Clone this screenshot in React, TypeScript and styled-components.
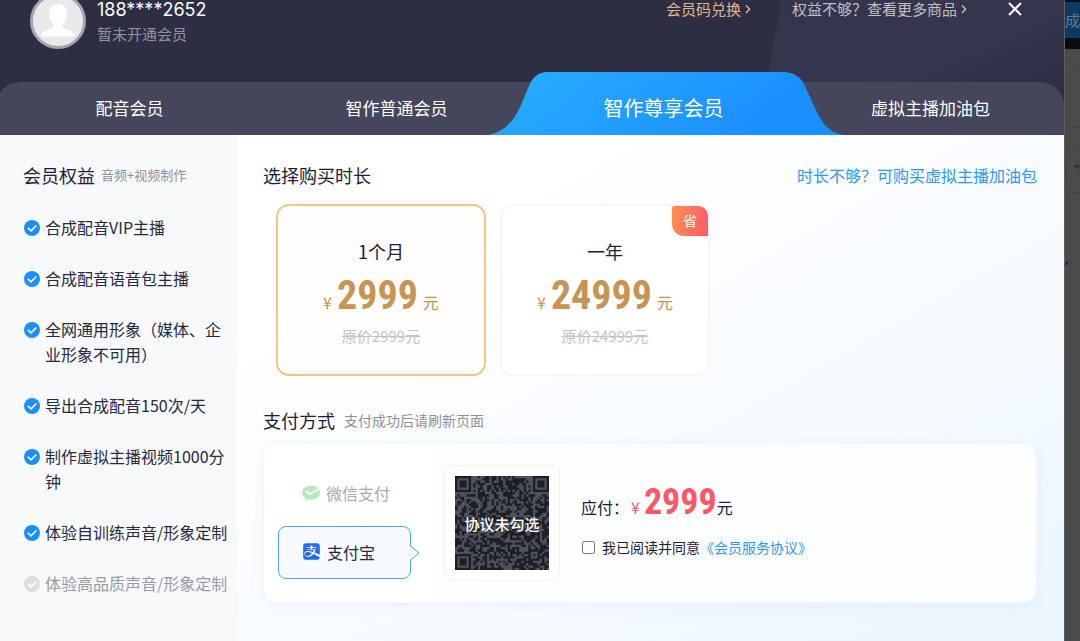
import React, { useState } from "react";
import styled, { createGlobalStyle, css } from "styled-components";
import { FaAlipay } from "react-icons/fa";

const sans = `"Noto Sans CJK SC", "Noto Sans", sans-serif`;
const digits = `Inter, "Noto Sans CJK SC", sans-serif`;
const narrow = `"Roboto Condensed", Roboto, sans-serif`;

const GlobalStyle = createGlobalStyle`
  * { box-sizing: border-box; }
  body { margin: 0; background: #4b4b4b; font-family: ${sans}; color: #1c2035; }
  button { border: 0; padding: 0; background: none; color: inherit; font: inherit; cursor: pointer; }
  a { color: inherit; text-decoration: none; }
  h2, p, ul { margin: 0; padding: 0; font-weight: inherit; }
`;

const Page = styled.div`
  display: flex;
  min-height: 100vh;
  overflow: hidden;
`;

const Dialog = styled.section`
  display: flex;
  flex-direction: column;
  flex: 1;
  min-width: 0;
`;

const Header = styled.header`
  position: relative;
  background: #2d2e44;
  &::before {
    content: "";
    position: absolute;
    inset: 0 0 0 auto;
    width: 300px;
    background: linear-gradient(155deg, #34354c 0%, #36374e 52%, #303148 66%, #2e2f46 100%);
    clip-path: polygon(17px 0, 100% 0, 100% 100%, -6px 100%);
  }
`;

const TopRow = styled.div`
  position: relative;
  display: flex;
  align-items: flex-start;
  height: 82px;
  padding: 0 42px 0 30px;
`;

const Avatar = styled.span`
  display: block;
  width: 56px;
  height: 56px;
  margin-top: -7px;
  border: 3px solid #a5a5b0;
  border-radius: 50%;
  overflow: hidden;
  background: #e9e9e9;
`;

const UserText = styled.div`
  padding: 0 0 0 11px;
`;

const Phone = styled.p`
  font: 400 18px/20px ${digits};
  color: #fff;
`;

const Status = styled.p`
  font-size: 15px;
  line-height: 28px;
  color: #9292a0;
`;

const TopLinks = styled.nav`
  display: flex;
  gap: 40px;
  margin-left: auto;
`;

const TopLink = styled.a<{ $gold?: boolean }>`
  display: flex;
  align-items: center;
  gap: 3px;
  font-size: 15px;
  line-height: 17px;
  white-space: nowrap;
  color: ${(p) => (p.$gold ? "#e2b688" : "#c0c0ca")};
`;

const Close = styled.button`
  display: flex;
  align-items: center;
  height: 17px;
  color: #fff;
`;

const Tabs = styled.div`
  position: relative;
  display: flex;
  height: 53px;
  margin-left: -4px;
  border-radius: 24px 24px 0 0;
  background: #45465b;
`;

const Tab = styled.button<{ $active?: boolean }>`
  position: relative;
  flex: 1;
  padding-bottom: 2px;
  font-size: ${(p) => (p.$active ? "20px" : "17px")};
  line-height: 51px;
  color: #fff;
  z-index: ${(p) => (p.$active ? 1 : 0)};
`;

const TabShape = styled.svg`
  position: absolute;
  bottom: 0;
  left: -42px;
  width: calc(100% + 91px);
  height: 63px;
`;

const TabLabel = styled.span`
  position: relative;
`;

const Body = styled.div`
  display: flex;
  flex: 1;
`;

const Sidebar = styled.aside`
  flex: 0 0 237px;
  padding: 27px 8px 28px 23px;
  background: #f8f9fb;
`;

const HeadingRow = styled.div`
  display: flex;
  align-items: center;
  height: 26px;
  line-height: 26px;
`;

const Heading = styled.h2`
  font-size: 18px;
  line-height: 26px;
  white-space: nowrap;
`;

const Note = styled.span<{ $size: number }>`
  margin-left: ${(p) => (p.$size === 13 ? 6 : 9)}px;
  font-size: ${(p) => p.$size}px;
  color: #8d919c;
`;

const Benefits = styled.ul`
  display: flex;
  flex-direction: column;
  gap: 26px;
  margin-top: 27px;
  list-style: none;
`;

const Benefit = styled.li<{ $off?: boolean }>`
  display: flex;
  gap: 5px;
  padding-left: 1px;
  font-size: 16px;
  line-height: 25px;
  color: ${(p) => (p.$off ? "#999ca5" : "#262a3d")};
  svg { flex: none; margin-top: 5px; color: ${(p) => (p.$off ? "#dcdee0" : "#1a90ff")}; }
`;

const Main = styled.main`
  flex: 1;
  min-width: 0;
  padding: 27px 27px 38px 26px;
  background: linear-gradient(150deg, #fff 20%, #f7fbff 60%, #eaf6ff 100%);
`;

const MoreLink = styled.a`
  margin-left: auto;
  font-size: 16px;
  color: #2d98fb;
`;

const Plans = styled.div`
  display: flex;
  gap: 14px;
  margin: 16px 0 31px 13px;
`;

const Plan = styled.button<{ $active: boolean }>`
  position: relative;
  display: flex;
  flex-direction: column;
  align-items: center;
  width: 210px;
  height: 172px;
  padding-top: 32px;
  border: 2px solid ${(p) => (p.$active ? "#f3c582" : "#f5f7f9")};
  border-radius: 13px;
  background: ${(p) => (p.$active ? "#fffefc" : "#fff")};
`;

const PlanName = styled.span`
  font-size: 18px;
  line-height: 26px;
  color: #1c2035;
`;

const Price = styled.span`
  display: flex;
  align-items: baseline;
  gap: 5px;
  height: 60px;
  font-size: 16px;
  line-height: 64px;
  color: #c69453;
`;

const Amount = styled.strong<{ $due?: boolean }>`
  font-family: ${narrow};
  font-size: ${(p) => (p.$due ? 36 : 40)}px;
  font-weight: 700;
`;

const Original = styled.s`
  font-size: 15px;
  line-height: 24px;
  color: #c3c4c8;
`;

const Badge = styled.span`
  position: absolute;
  top: 0;
  right: 0;
  width: 36px;
  height: 30px;
  border-radius: 2px 10px 0 12px;
  background: linear-gradient(100deg, #ff9050, #ff5a68);
  color: #fff;
  font-size: 14px;
  line-height: 29px;
`;

const PayPanel = styled.div`
  display: flex;
  align-items: center;
  margin-top: 10px;
  padding: 21px 14px;
  border: 1px solid #f3f6f9;
  border-radius: 14px;
  background: linear-gradient(90deg, #fff, #fbfdff);
  box-shadow: 0 4px 16px rgba(60, 90, 130, 0.05);
`;

const Methods = styled.div`
  display: flex;
  flex-direction: column;
  gap: 6px;
`;

const Method = styled.button<{ $active?: boolean }>`
  position: relative;
  display: flex;
  align-items: center;
  gap: 6px;
  width: 133px;
  height: 53px;
  padding: 0 0 2px 23px;
  border: 1px solid transparent;
  border-radius: 8px;
  font-size: 16px;
  color: #a9abb1;
  ${(p) =>
    p.$active &&
    css`
      border-color: #4ba6fb;
      background: #f7fbff;
      color: #262a3d;
    `}
`;

const Pointer = styled.svg`
  position: absolute;
  top: 18px;
  right: -10px;
`;

const CodeCard = styled.div`
  position: relative;
  display: grid;
  place-items: center;
  width: 116px;
  height: 116px;
  margin: 0 21px 0 33px;
  border: 1px solid #f0f3f6;
  border-radius: 8px;
  background: #fff;
`;

const CodeText = styled.span`
  position: absolute;
  font-size: 15px;
  font-weight: 500;
  white-space: nowrap;
  color: #fff;
`;

const Summary = styled.div`
  display: flex;
  flex-direction: column;
  gap: 7px;
`;

const Due = styled.p`
  display: flex;
  align-items: baseline;
  height: 41px;
  font-size: 16px;
  line-height: 30px;
  em { margin: 0 4px 0 2px; font-style: normal; color: #ff5765; }
  strong { color: #ff5765; }
`;

const Agree = styled.div`
  display: flex;
  align-items: center;
  font-size: 14px;
  line-height: 24px;
  input { width: 13px; height: 13px; margin: 0 7px 0 1px; }
  a { color: #2d98fb; }
`;

const Backdrop = styled.div`
  flex: 0 0 16px;
  overflow: hidden;
  border-left: 1px solid #5d6064;
  background: #4b4b4b;
  color: #1a1a1e;
`;

const BackdropBar = styled.div`
  height: 49px;
  padding: 2px 0 11px;
  background: #0a0c11;
`;

const BackdropButton = styled.div`
  height: 36px;
  background: #0c3a62;
  color: #66798b;
  font-size: 15px;
  line-height: 36px;
  white-space: nowrap;
`;

const BackdropRow = styled.div<{ $h: number }>`
  height: ${(p) => p.$h}px;
  border-bottom: 1px solid #434648;
`;

const BackdropTag = styled.div`
  display: flex;
  gap: 8px;
  padding-top: 18px;
  font-size: 13px;
  line-height: 14px;
  &::before { content: ""; width: 2px; height: 14px; background: #0c4a80; }
`;

const BackdropTick = styled.svg`
  display: block;
  margin-top: 67px;
`;

const Tick = () => (
  <svg width="16" height="16" viewBox="0 0 16 16" aria-hidden="true">
    <circle cx="8" cy="8" r="8" fill="currentColor" />
    <path d="M3.8 7.8 7 10.9 12.4 5.5" fill="none" stroke="#fff" strokeWidth="1.6" />
  </svg>
);

const Chevron = () => (
  <svg width="8" height="10" viewBox="0 0 8 10" aria-hidden="true">
    <path d="M2 1.5 5.6 5.2 2 9" fill="none" stroke="currentColor" strokeWidth="1.4" />
  </svg>
);

const WechatPay = () => (
  <svg width="18" height="18" viewBox="0 0 18 18" aria-hidden="true">
    <path d="M9 1.6c5 0 9 3.1 9 7.1s-4 7.1-9 7.1c-1.1 0-2.2-.2-3.2-.5L3 16.6l.4-2.7C1.3 12.6 0 10.8 0 8.700c0-4 4-7.100 9-7.100z" fill="#b9e8bf" />
    <path d="M4.6 7.2 7.3 10.2 17 5" fill="none" stroke="#fff" strokeWidth="1.7" />
  </svg>
);

const SIZE = 41;

// Decides whether a module of the placeholder code is light.
function isLight(x: number, y: number): boolean {
  const corners = [[0, 0], [SIZE - 7, 0], [0, SIZE - 7]];
  for (const [cx, cy] of corners) {
    const d = Math.max(Math.abs(x - cx - 3), Math.abs(y - cy - 3));
    if (d <= 4) return d === 2 || d === 4;
  }
  const a = Math.max(Math.abs(x - 34), Math.abs(y - 34));
  if (a <= 2) return a === 1;
  if (x === 6 || y === 6) return (x + y) % 2 === 1;
  let h = (x * 374761393 + y * 668265263) | 0;
  h = Math.imul(h ^ (h >>> 13), 1274126177);
  return (((h ^ (h >>> 16)) >>> 0) % 100) < 47;
}

const modules = Array.from({ length: SIZE * SIZE }, (_, i) => [i % SIZE, Math.floor(i / SIZE)])
  .filter(([x, y]) => isLight(x, y))
  .map(([x, y]) => `M${x} ${y}h1v1h-1z`)
  .join("");

const QrCode = () => (
  <svg width="94" height="94" viewBox={`0 0 ${SIZE} ${SIZE}`} aria-hidden="true">
    <rect width={SIZE} height={SIZE} fill="#1b1e27" />
    <path d={modules} fill="#4e515a" />
  </svg>
);

const benefits = [
  "合成配音VIP主播",
  "合成配音语音包主播",
  "全网通用形象（媒体、企业形象不可用）",
  "导出合成配音150次/天",
  "制作虚拟主播视频1000分钟",
  "体验自训练声音/形象定制",
  "体验高品质声音/形象定制",
];

const tabs = ["配音会员", "智作普通会员", "智作尊享会员", "虚拟主播加油包"];

const plans = [
  { name: "1个月", price: "2999" },
  { name: "一年", price: "24999", badge: "省" },
];

export default function App() {
  const [plan, setPlan] = useState(0);
  return (
    <>
      <GlobalStyle />
      <Page>
        <Dialog>
          <Header>
            <TopRow>
              <Avatar>
                <svg width="50" height="50" viewBox="0 0 50 50" aria-hidden="true">
                  <path d="M25 8c6 0 9 4 9 9.500 0 5-2 8-4 10.500-1 3 0 4 3 5 6 2 9 3 9 7.500H8c0-4.500 3-5.500 9-7.500 3-1 4-2 3-5-2-2.500-4-5.500-4-10.500C16 12 19 8 25 8z" fill="#fff" />
                </svg>
              </Avatar>
              <UserText>
                <Phone>188****2652</Phone>
                <Status>暂未开通会员</Status>
              </UserText>
              <TopLinks>
                <TopLink href="#redeem" $gold>会员码兑换 <Chevron /></TopLink>
                <TopLink href="#goods">权益不够？查看更多商品 <Chevron /></TopLink>
                <Close aria-label="关闭">
                  <svg width="14" height="14" viewBox="0 0 14 14" aria-hidden="true">
                    <path d="M1 1 13 13M13 1 1 13" stroke="currentColor" strokeWidth="2" />
                  </svg>
                </Close>
              </TopLinks>
            </TopRow>
            <Tabs role="tablist">
              {tabs.map((t, i) => (
                <Tab key={t} role="tab" aria-selected={i === 2} $active={i === 2}>
                  {i === 2 && (
                    <TabShape viewBox="0 0 358 63" preserveAspectRatio="none" aria-hidden="true">
                      <defs>
                        <linearGradient id="tab" x1="0" y1="0" x2="1" y2="0.2">
                          <stop offset="0.05" stopColor="#27adff" />
                          <stop offset="0.9" stopColor="#1b8fff" />
                        </linearGradient>
                      </defs>
                      <path d="M0 63C12 61 20 54 26 46C34 34 37 22 41 14C45 5 50 0 60 0H295C306 0 313 5 317 14C322 25 327 38 334 49C340 58 347 62 358 63Z" fill="url(#tab)" />
                    </TabShape>
                  )}
                  <TabLabel>{t}</TabLabel>
                </Tab>
              ))}
            </Tabs>
          </Header>
          <Body>
            <Sidebar>
              <HeadingRow>
                <Heading>会员权益</Heading>
                <Note $size={13}>音频+视频制作</Note>
              </HeadingRow>
              <Benefits>
                {benefits.map((b, i) => (
                  <Benefit key={b} $off={i === benefits.length - 1}>
                    <Tick />
                    <span>{b}</span>
                  </Benefit>
                ))}
              </Benefits>
            </Sidebar>
            <Main>
              <HeadingRow>
                <Heading>选择购买时长</Heading>
                <MoreLink href="#addon">时长不够？可购买虚拟主播加油包</MoreLink>
              </HeadingRow>
              <Plans>
                {plans.map((p, i) => (
                  <Plan key={p.name} $active={plan === i} aria-pressed={plan === i} onClick={() => setPlan(i)}>
                    <PlanName>{p.name}</PlanName>
                    <Price>
                      <span>¥</span>
                      <Amount>{p.price}</Amount>
                      <span>元</span>
                    </Price>
                    <Original>原价{p.price}元</Original>
                    {p.badge && <Badge>{p.badge}</Badge>}
                  </Plan>
                ))}
              </Plans>
              <HeadingRow>
                <Heading>支付方式</Heading>
                <Note $size={14}>支付成功后请刷新页面</Note>
              </HeadingRow>
              <PayPanel>
                <Methods>
                  <Method><WechatPay />微信支付</Method>
                  <Method $active>
                    <FaAlipay size={19} color="#2469f0" />支付宝
                    <Pointer width="10" height="16" viewBox="0 0 10 16" aria-hidden="true">
                      <path d="M0 0.5 L9 8 L0 15.5" fill="#f7fbff" stroke="#4ba6fb" />
                    </Pointer>
                  </Method>
                </Methods>
                <CodeCard>
                  <QrCode />
                  <CodeText>协议未勾选</CodeText>
                </CodeCard>
                <Summary>
                  <Due>
                    应付：<em>¥</em><Amount $due>{plans[plan].price}</Amount>元
                  </Due>
                  <Agree>
                    <input type="checkbox" id="agree" />
                    <label htmlFor="agree">我已阅读并同意</label>
                    <a href="#terms">《会员服务协议》</a>
                  </Agree>
                </Summary>
              </PayPanel>
            </Main>
          </Body>
        </Dialog>
        <Backdrop>
          <BackdropBar>
            <BackdropButton>成</BackdropButton>
          </BackdropBar>
          <BackdropRow $h={19} />
          <BackdropRow $h={59} />
          <BackdropRow $h={18} />
          <BackdropRow $h={49}>
            <BackdropTag>"</BackdropTag>
          </BackdropRow>
          <BackdropTick width="4" height="6" viewBox="0 0 4 6" aria-hidden="true">
            <path d="M0 4 3 1" stroke="#1a1a1e" strokeWidth="1.5" />
          </BackdropTick>
        </Backdrop>
      </Page>
    </>
  );
}
